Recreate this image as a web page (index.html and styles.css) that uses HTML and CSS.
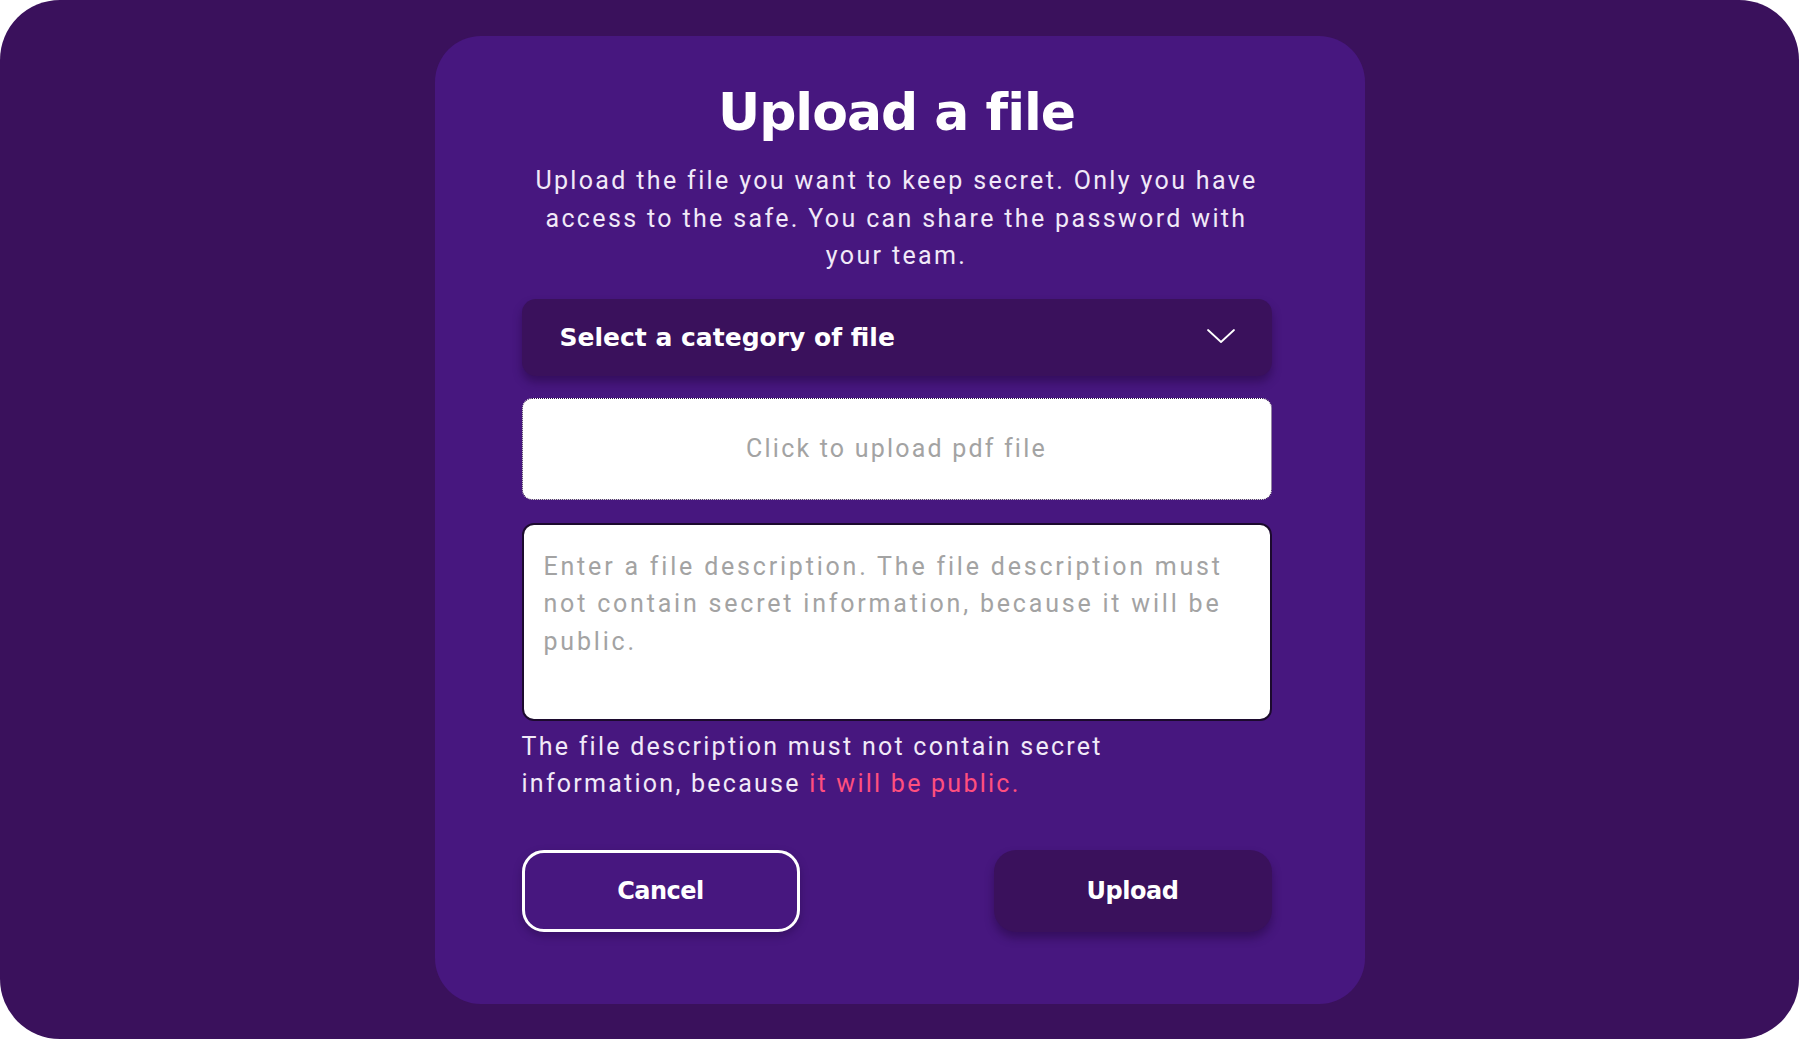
FILE: index.html
```html
<!DOCTYPE html>
<html lang="en">
<head>
<meta charset="utf-8">
<title>Upload a file</title>
<link rel="stylesheet" href="styles.css">
</head>
<body>
<div class="frame">
  <main class="card">
    <h1 class="title">Upload a file</h1>
    <p class="lead">Upload the file you want to keep secret. Only you have access to the safe. You can share the password with your team.</p>
    <div class="select">
      <span class="select-label">Select a category of file</span>
      <svg class="chevron" width="30" height="18" viewBox="0 0 30 18" fill="none" stroke="#ffffff" stroke-width="1.8" stroke-linecap="round" stroke-linejoin="round"><path d="M2 3 L15 15 L28 3"/></svg>
    </div>
    <label class="dropzone">Click to upload pdf file</label>
    <textarea class="desc" placeholder="Enter a file description. The file description must not contain secret information, because it will be public."></textarea>
    <p class="hint">The file description must not contain secret information, because <span class="warn">it will be public.</span></p>
    <div class="actions">
      <button class="btn btn-outline">Cancel</button>
      <button class="btn btn-solid">Upload</button>
    </div>
  </main>
</div>
</body>
</html>
```
FILE: styles.css
```css
* { box-sizing: border-box; }
html, body { margin: 0; padding: 0; background: #ffffff; }
body { font-family: "Roboto", "Liberation Sans", sans-serif; }

.frame {
  width: 100%;
  height: 100vh;
  background: #3a115c;
  border-radius: 60px;
  display: flex;
  justify-content: center;
  align-items: flex-start;
  padding-top: 36px;
}

.card {
  width: 930px;
  height: 968px;
  background: #47177f;
  border-radius: 46px;
  padding: 46px 93px 72px 87px;
  display: flex;
  flex-direction: column;
}

.title {
  margin: 0;
  text-align: center;
  font-family: "DejaVu Sans", sans-serif;
  font-weight: 700;
  font-size: 52px;
  line-height: 60px;
  letter-spacing: -1px;
  color: #ffffff;
}

.lead {
  margin: 20px auto 0;
  max-width: 760px;
  text-align: center;
  font-size: 25px;
  line-height: 37.5px;
  letter-spacing: 2.35px;
  color: #f1e9f8;
}

.select {
  margin-top: 24px;
  height: 77px;
  background: #3a115c;
  border-radius: 14px;
  box-shadow: 0 6px 10px rgba(30, 5, 55, 0.45);
  display: flex;
  align-items: center;
  justify-content: space-between;
  padding: 0 36px 0 38px;
}
.select-label {
  font-family: "DejaVu Sans", sans-serif;
  font-weight: 700;
  font-size: 25px;
  letter-spacing: 0;
  color: #ffffff;
}
.chevron { margin-top: -2px; }

.dropzone {
  margin-top: 22px;
  height: 102px;
  background: #ffffff;
  border: 1px dotted #2a0c48;
  border-radius: 10px;
  display: flex;
  align-items: center;
  justify-content: center;
  font-size: 25px;
  letter-spacing: 2.2px;
  color: #a3a3a3;
}

.desc {
  margin-top: 23px;
  height: 198px;
  width: 100%;
  resize: none;
  background: #ffffff;
  border: 2px solid #1c0a2e;
  border-radius: 12px;
  padding: 23px 20px;
  font-family: "Roboto", "Liberation Sans", sans-serif;
  font-size: 25px;
  line-height: 37.5px;
  letter-spacing: 2.8px;
  color: #333333;
  outline: none;
}
.desc::placeholder { color: #a3a3a3; opacity: 1; }

.hint {
  margin: 7px 0 0;
  max-width: 700px;
  font-size: 25px;
  line-height: 37.5px;
  letter-spacing: 2.25px;
  color: #f1e9f8;
}
.warn { color: #ff4f7e; }

.actions {
  margin-top: auto;
  display: flex;
  justify-content: space-between;
}
.btn {
  width: 278px;
  height: 82px;
  border-radius: 22px;
  font-family: "DejaVu Sans", sans-serif;
  font-weight: 700;
  font-size: 24px;
  letter-spacing: -0.5px;
  color: #ffffff;
  cursor: pointer;
}
.btn-outline {
  background: #47177f;
  border: 3px solid #ffffff;
  box-shadow: 0 4px 8px rgba(30, 5, 55, 0.35);
}
.btn-solid {
  background: #3a115c;
  border: none;
  box-shadow: 0 6px 10px rgba(30, 5, 55, 0.45);
}
```
